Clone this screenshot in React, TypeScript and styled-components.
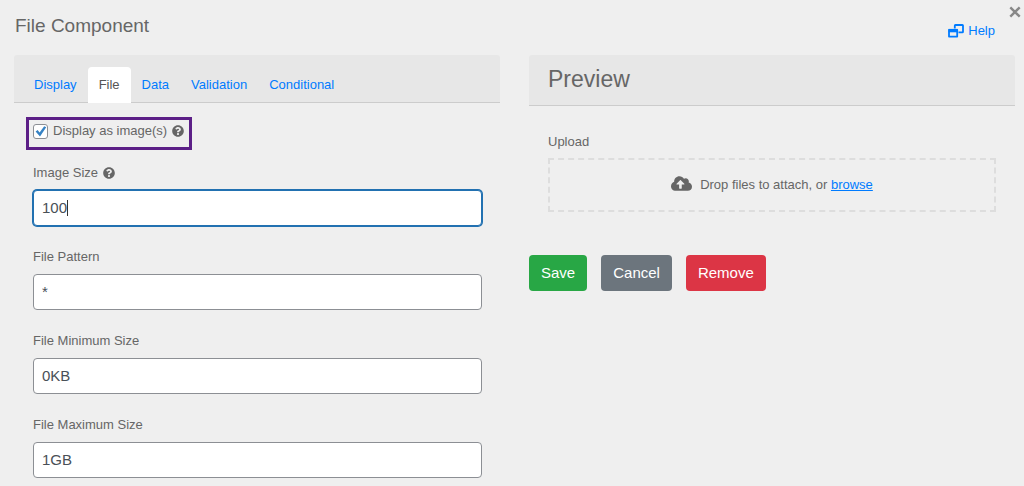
import React from 'react';
import styled, { createGlobalStyle, css } from 'styled-components';
import { FaCloudUploadAlt, FaQuestionCircle } from 'react-icons/fa';

const GlobalStyle = createGlobalStyle`
  *, *::before, *::after { box-sizing: border-box; }
  body {
    margin: 0;
    background: #efefef;
    color: #666;
    font: 13px/20px "Liberation Sans", Arial, sans-serif;
  }
  button, input { font-family: inherit; }
`;

const Dialog = styled.main`
  position: relative;
  padding: 0 9px 8px 14px;
`;

const TopBar = styled.header`
  display: flex;
  justify-content: space-between;
  align-items: flex-start;
  height: 55px;
  padding: 14px 20px 0 1px;
`;

const Title = styled.h1`
  margin: 0;
  font-size: 19px;
  font-weight: 400;
  line-height: 24px;
`;

const HelpLink = styled.a`
  display: flex;
  align-items: center;
  gap: 4px;
  margin-top: 7px;
  color: #007bff;
  text-decoration: none;
`;

const CloseButton = styled.button`
  position: absolute;
  top: 6px;
  right: 3px;
  display: flex;
  padding: 0;
  border: 0;
  background: none;
  color: #888;
`;

const Columns = styled.div`
  display: grid;
  grid-template-columns: 1fr 1fr;
  gap: 29px;
`;

const panelHeader = css`
  background: #e7e7e7;
  border-bottom: 1px solid #ccc;
  border-radius: 3px 3px 0 0;
`;

const TabBar = styled.nav`
  ${panelHeader}
  display: flex;
  height: 48px;
  padding: 12px 9px 0;
`;

const Tab = styled.a<{ $active?: boolean }>`
  height: 36px;
  padding: 8px 11px;
  border-radius: 4px 4px 0 0;
  color: ${(p) => (p.$active ? '#555' : '#007bff')};
  background: ${(p) => (p.$active ? '#fff' : 'transparent')};
  text-decoration: none;
`;

const SettingsBody = styled.form`
  padding: 14px 18px 0 19px;
`;

const Highlight = styled.div`
  display: flex;
  width: fit-content;
  height: 33px;
  margin: 0 -7px 13px;
  padding: 1px 5px 0 4px;
  border: 3px solid #5c1f87;
`;

const CheckLabel = styled.label`
  display: flex;
  align-items: center;
  gap: 5px;
  height: 20px;
`;

const Checkbox = styled.input`
  appearance: none;
  width: 15px;
  height: 15px;
  margin: 0;
  border: 1px solid #8c8f94;
  border-radius: 3px;
  background: #fff;
`;

const CheckHolder = styled.span`
  position: relative;
  display: flex;
`;

const CheckMark = styled.svg`
  position: absolute;
  inset: 0;
  pointer-events: none;
`;

const Fields = styled.div`
  display: grid;
  gap: 21px;
`;

const Field = styled.div`
  display: grid;
  gap: 7px;
`;

const FieldLabel = styled.label`
  display: flex;
  align-items: center;
  gap: 5px;
`;

const InputHolder = styled.div`
  position: relative;
`;

const TextInput = styled.input`
  display: block;
  width: 100%;
  height: 36px;
  padding: 0 8px 2px;
  border: 1px solid #8c8f94;
  border-radius: 4px;
  background: #fff;
  color: #495057;
  font-size: 15px;
  outline: none;

  &:focus {
    border-color: #2271b1;
    box-shadow: 0 0 0 1px #2271b1;
    caret-color: transparent;
  }
`;

const Caret = styled.span`
  position: absolute;
  top: 10px;
  left: 34px;
  width: 1px;
  height: 16px;
  background: #333;
`;

const PreviewHeader = styled.h2`
  ${panelHeader}
  margin: 0;
  padding: 11px 19px 13px;
  font-size: 23px;
  font-weight: 400;
  line-height: 26px;
`;

const PreviewBody = styled.div`
  display: grid;
  gap: 6px;
  padding: 26px 19px 0;
`;

const DropZone = styled.div`
  display: flex;
  justify-content: center;
  align-items: center;
  gap: 8px;
  height: 54px;
  border: 2px dashed #ddd;
`;

const CloudIcon = styled(FaCloudUploadAlt)`
  width: 21px;
  height: 17px;
  margin-bottom: 4px;
`;

const Browse = styled.a`
  color: #007bff;
  text-decoration: underline;
`;

const Actions = styled.div`
  display: flex;
  gap: 14px;
  margin-top: 43px;
`;

const ActionButton = styled.button<{ $color: string }>`
  height: 36px;
  padding: 0 12px 2px;
  border: 0;
  border-radius: 4px;
  background: ${(p) => p.$color};
  color: #fff;
  font-size: 15px;
`;

const tabs = ['Display', 'File', 'Data', 'Validation', 'Conditional'];

const fields = [
  { id: 'image-size', label: 'Image Size', value: '100', help: true },
  { id: 'file-pattern', label: 'File Pattern', value: '*' },
  { id: 'file-min', label: 'File Minimum Size', value: '0KB' },
  { id: 'file-max', label: 'File Maximum Size', value: '1GB' },
];

export default function App() {
  return (
    <>
      <GlobalStyle />
      <Dialog>
        <TopBar>
          <Title>File Component</Title>
          <HelpLink href="#help">
            <svg width="16" height="14" viewBox="0 0 16 14" fill="none" stroke="currentColor" aria-hidden="true">
              <path d="M6.8 4.5V1.6q0-.6.6-.6h7q.6 0 .6.6v6.2q0 .6-.6.6H10.5" strokeWidth="1.8" />
              <path d="M1 5.8h8.2v6.8H1z" strokeWidth="1.8" strokeLinejoin="round" />
              <path d="M.6 6.6h9" strokeWidth="3.4" />
            </svg>
            Help
          </HelpLink>
        </TopBar>
        <CloseButton type="button" aria-label="Close">
          <svg width="12" height="12" viewBox="0 0 12 12" stroke="currentColor" strokeWidth="2.4" aria-hidden="true">
            <path d="M1.3 1.3l9.4 9.4M10.7 1.3l-9.4 9.4" />
          </svg>
        </CloseButton>
        <Columns>
          <section>
            <TabBar>
              {tabs.map((t) => (
                <Tab key={t} href={`#${t.toLowerCase()}`} $active={t === 'File'}>
                  {t}
                </Tab>
              ))}
            </TabBar>
            <SettingsBody>
              <Highlight>
                <CheckLabel>
                  <CheckHolder>
                    <Checkbox type="checkbox" defaultChecked />
                    <CheckMark width="15" height="15" viewBox="0 0 15 15" fill="#3582c4" aria-hidden="true">
                      <path d="M2.6 7.4l2-1.3 2 2.5L11.2 2.2l2 1.1L7 12.4z" />
                    </CheckMark>
                  </CheckHolder>
                  Display as image(s)
                  <FaQuestionCircle size={12} />
                </CheckLabel>
              </Highlight>
              <Fields>
                {fields.map((f) => (
                  <Field key={f.id}>
                    <FieldLabel htmlFor={f.id}>
                      {f.label}
                      {f.help && <FaQuestionCircle size={12} />}
                    </FieldLabel>
                    <InputHolder>
                      <TextInput id={f.id} type="text" defaultValue={f.value} autoFocus={f.id === 'image-size'} />
                      {f.id === 'image-size' && <Caret />}
                    </InputHolder>
                  </Field>
                ))}
              </Fields>
            </SettingsBody>
          </section>
          <section>
            <PreviewHeader>Preview</PreviewHeader>
            <PreviewBody>
              <span>Upload</span>
              <DropZone>
                <CloudIcon />
                <span>
                  Drop files to attach, or <Browse href="#browse">browse</Browse>
                </span>
              </DropZone>
            </PreviewBody>
            <Actions>
              <ActionButton type="button" $color="#28a745">Save</ActionButton>
              <ActionButton type="button" $color="#6c757d">Cancel</ActionButton>
              <ActionButton type="button" $color="#dc3545">Remove</ActionButton>
            </Actions>
          </section>
        </Columns>
      </Dialog>
    </>
  );
}
